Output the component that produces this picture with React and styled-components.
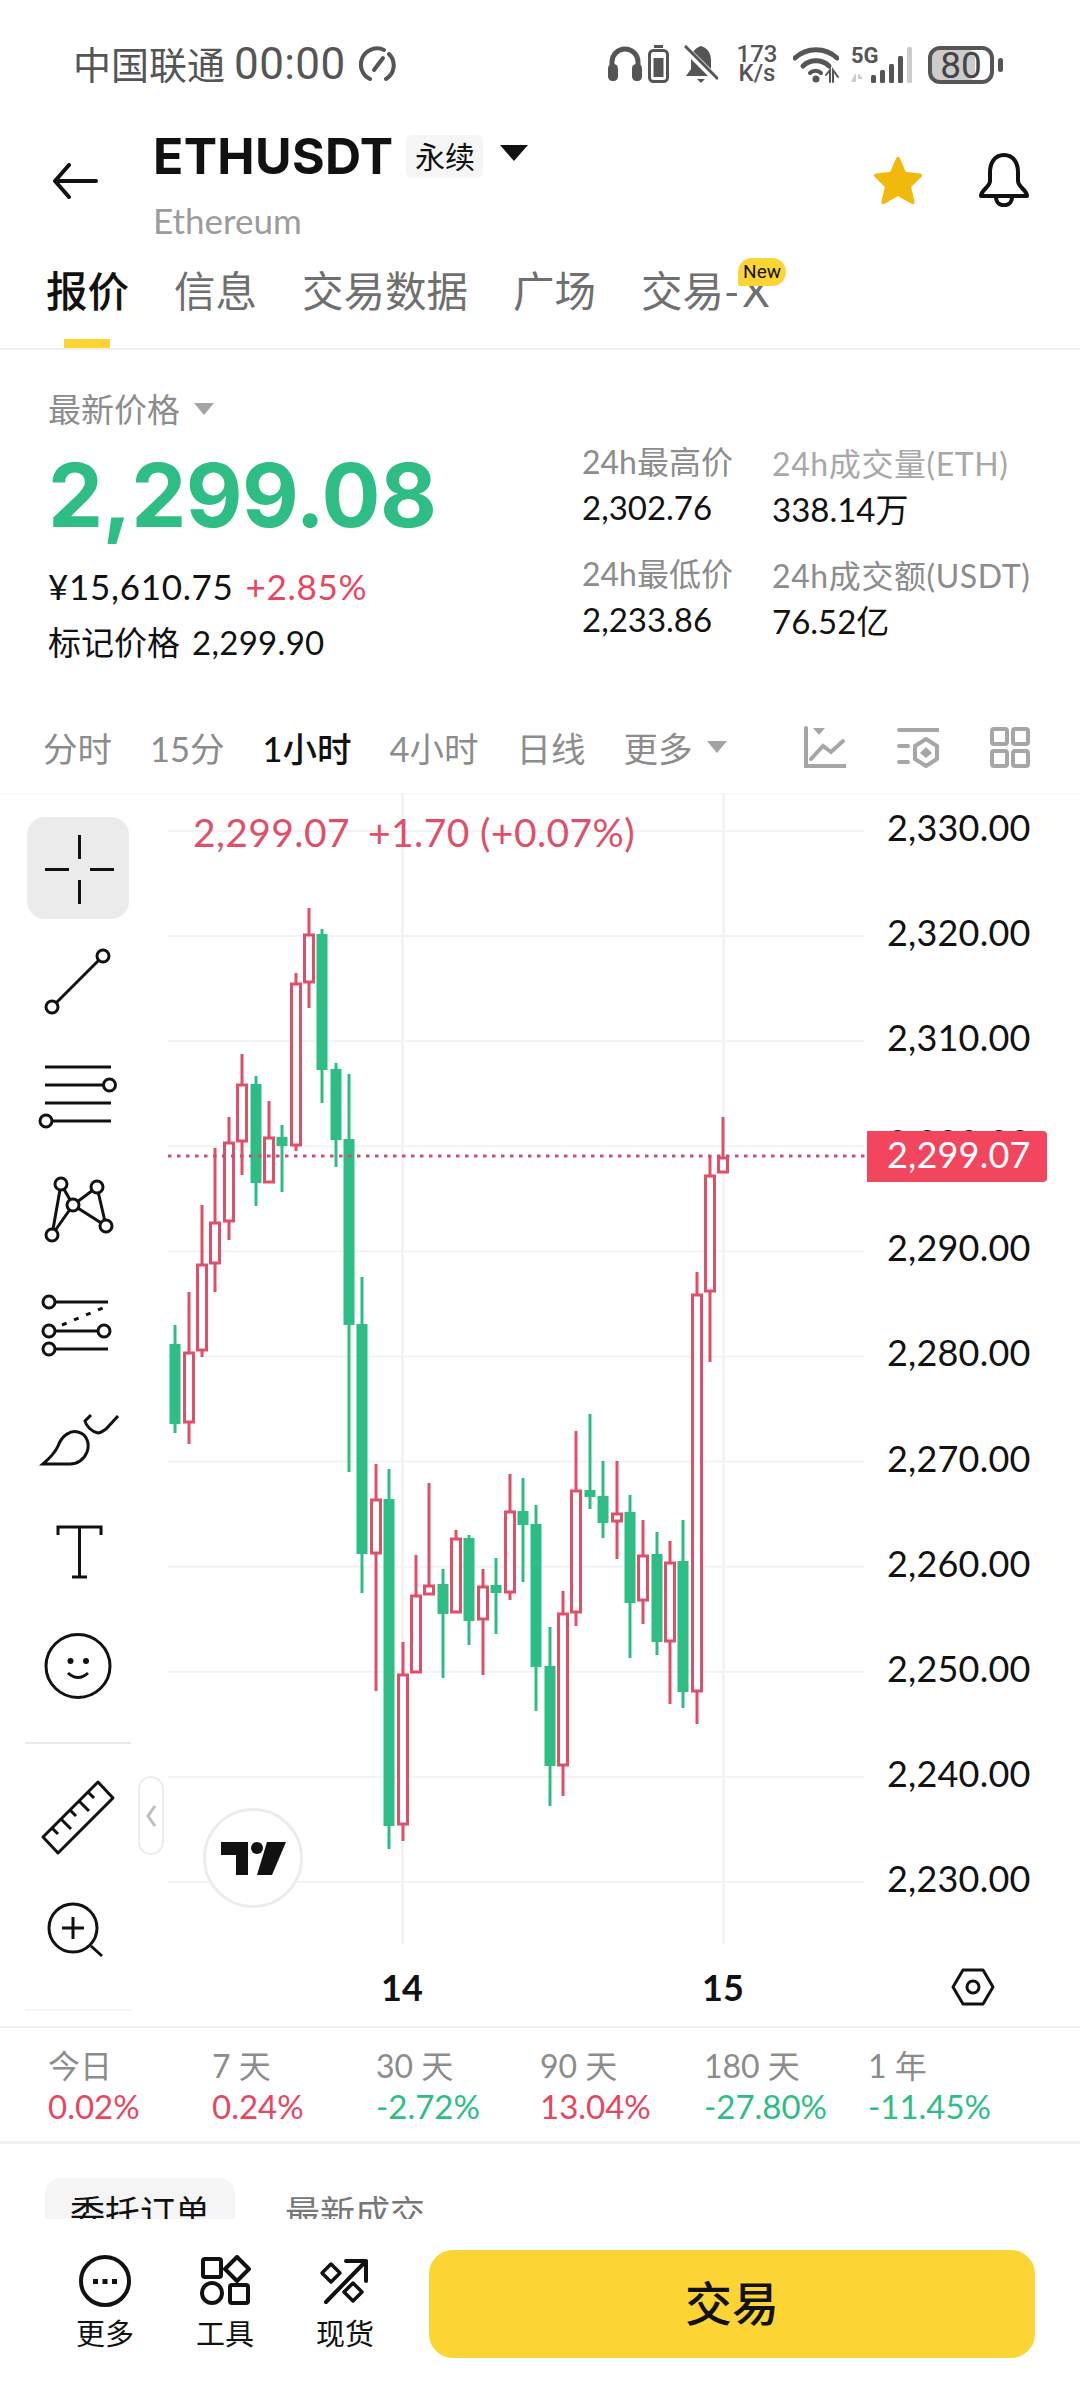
import React from "react";
import styled, { createGlobalStyle } from "styled-components";

const GlobalStyle = createGlobalStyle`
  html, body {
    margin: 0;
    padding: 0;
    background: #fff;
    font-family: Lato, "Noto Sans CJK SC", sans-serif;
  }
  * { box-sizing: border-box; }
`;

const GREEN = "#2ebd85";
const RED = "#de4f69";
const PINK = "#e8465f";
const GREY = "#8c8c8c";

const Page = styled.div`
  width: 1080px;
  height: 2388px;
  overflow: hidden;
  display: flex;
  flex-direction: column;
  background: #fff;
  color: #111;
`;

/* status bar */
const StatusBar = styled.div`
  height: 117px;
  flex: none;
  display: flex;
  align-items: flex-start;
  padding: 45px 77px 0 73px;
  color: #555;
`;
const Carrier = styled.span`
  font-size: 38px;
  line-height: 38px;
`;
const Clock = styled.span`
  font-family: Roboto, sans-serif;
  font-size: 44px;
  line-height: 38px;
  font-weight: 400;
  margin-left: 9px;
  letter-spacing: 0.4px;
`;
const StatusGroup = styled.div`
  margin-left: auto;
  display: flex;
  align-items: flex-start;
`;
const StatusIcon = styled.svg`
  display: block;
  flex: none;
  margin-left: ${(p) => p.$gap || 0}px;
  margin-top: ${(p) => p.$top || 0}px;
`;
const Speed = styled.div`
  width: 42px;
  margin-left: 18px;
  margin-top: 0;
  font-family: Roboto, sans-serif;
  font-weight: 500;
  font-size: 24px;
  line-height: 19px;
  text-align: center;
  color: #555;
`;

/* header */
const Header = styled.div`
  height: 133px;
  flex: none;
  display: flex;
  align-items: flex-start;
  padding: 0 50px 0 52px;
`;
const BackIcon = styled.svg`
  margin-top: 46px;
  flex: none;
`;
const TitleBlock = styled.div`
  margin-left: 55px;
  margin-top: 9px;
`;
const TitleRow = styled.div`
  display: flex;
  align-items: center;
  height: 60px;
`;
const Symbol = styled.span`
  font-family: Inter, sans-serif;
  font-weight: 700;
  font-size: 50px;
  line-height: 60px;
  letter-spacing: 0.3px;
`;
const Badge = styled.span`
  margin-left: 13px;
  width: 77px;
  height: 43px;
  border-radius: 6px;
  background: #f5f5f5;
  font-size: 30px;
  line-height: 43px;
  text-align: center;
`;
const TitleCaret = styled.span`
  margin-left: 17px;
  margin-top: -6px;
  width: 0;
  height: 0;
  border-left: 14px solid transparent;
  border-right: 14px solid transparent;
  border-top: 16px solid #111;
`;
const SubName = styled.div`
  margin: 14px 0 0 0;
  font-size: 35px;
  line-height: 40px;
  color: #9c9c9c;
`;
const HeaderIcon = styled.svg`
  flex: none;
  margin-top: ${(p) => p.$top}px;
  margin-left: ${(p) => p.$left};
`;

/* tabs */
const Tabs = styled.div`
  height: 100px;
  flex: none;
  display: flex;
  gap: 45px;
  padding: 16px 0 0 46px;
  border-bottom: 2px solid #eee;
`;
const Tab = styled.div`
  position: relative;
  height: 82px;
  font-size: 41.5px;
  line-height: 50px;
  color: ${(p) => (p.$active ? "#111" : "#6f6f6f")};
  font-weight: ${(p) => (p.$active ? 500 : 400)};
  ${(p) =>
    p.$active &&
    `&::after {
      content: "";
      position: absolute;
      left: 18px;
      bottom: 0;
      width: 46px;
      height: 9px;
      background: #fcd535;
    }`}
`;
const TabX = styled.span`
  letter-spacing: 3px;
`;
const NewTag = styled.span`
  position: absolute;
  left: 97px;
  top: -8px;
  width: 48px;
  height: 28px;
  border-radius: 14px 14px 14px 2px;
  background: #fcd535;
  color: #111;
  font-family: Roboto, sans-serif;
  font-size: 19px;
  line-height: 28px;
  text-align: center;
`;

/* price summary */
const Summary = styled.div`
  height: 355px;
  flex: none;
  display: flex;
`;
const SummaryLeft = styled.div`
  width: 582px;
  padding: 40px 0 0 48px;
`;
const PriceLabel = styled.div`
  display: flex;
  align-items: center;
  gap: 14px;
  font-size: 33px;
  line-height: 38px;
  color: ${GREY};
`;
const SmallCaret = styled.span`
  width: 0;
  height: 0;
  border-left: ${(p) => p.$size}px solid transparent;
  border-right: ${(p) => p.$size}px solid transparent;
  border-top: ${(p) => p.$size + 2}px solid #a3a3a3;
`;
const BigPrice = styled.div`
  margin: 17px 0 0 0;
  font-family: Inter, sans-serif;
  font-weight: 700;
  font-size: 87.5px;
  line-height: 100px;
  letter-spacing: -0.6px;
  color: ${GREEN};
`;
const FiatLine = styled.div`
  margin-top: 21px;
  font-size: 35px;
  line-height: 40px;
  letter-spacing: 0.7px;
  display: flex;
  gap: 12px;
`;
const Change = styled.span`
  color: ${PINK};
`;
const MarkLine = styled.div`
  margin-top: 16px;
  font-size: 33px;
  line-height: 40px;
  display: flex;
  gap: 12px;
  span:last-child {
    font-size: 33px;
    letter-spacing: 0.3px;
  }
`;
const StatColumn = styled.div`
  width: ${(p) => p.$width}px;
  padding-top: ${(p) => p.$top}px;
  display: flex;
  flex-direction: column;
  gap: 27px;
`;
const StatLabel = styled.div`
  font-size: 32px;
  line-height: 40px;
  white-space: nowrap;
  letter-spacing: ${(p) => p.$spacing || 0}px;
  color: ${(p) => p.$color || GREY};
`;
const StatValue = styled.div`
  margin-top: 5px;
  font-size: 33px;
  line-height: 40px;
  color: #111;
`;

/* interval selector */
const Intervals = styled.div`
  height: 88px;
  flex: none;
  display: flex;
  align-items: center;
  gap: 38px;
  padding: 0 50px 4px 43px;
  font-size: 34.5px;
  color: ${GREY};
`;
const Interval = styled.span`
  color: ${(p) => (p.$active ? "#111" : GREY)};
  font-weight: ${(p) => (p.$active ? 500 : 400)};
`;
const MoreInterval = styled.span`
  display: flex;
  align-items: center;
  gap: 14px;
`;
const ChartTools = styled.div`
  margin-left: auto;
  display: flex;
  gap: 51px;
`;

/* chart */
const Chart = styled.div`
  position: relative;
  height: 1151px;
  flex: none;
  display: grid;
  grid-template-columns: 168px 699px 213px;
  border-top: 1px solid #f6f6f6;
`;
const Toolbar = styled.div`
  position: relative;
  z-index: 2;
  padding: 23px 0 0 27px;
  display: flex;
  flex-direction: column;
  gap: 12px;
`;
const ToolButton = styled.div`
  width: 102px;
  height: 102px;
  flex: none;
  border-radius: 18px;
  background: ${(p) => (p.$active ? "#ebebeb" : "transparent")};
`;
const ToolDivider = styled.div`
  width: 106px;
  height: 2px;
  flex: none;
  margin: ${(p) => (p.$faint ? "15px 0 0 -2px" : "13px 0 10px -2px")};
  background: ${(p) => (p.$faint ? "#f6f6f6" : "#eaeaea")};
`;
const CollapseHandle = styled.div`
  position: absolute;
  left: 138px;
  top: 982px;
  width: 26px;
  height: 79px;
  border: 2px solid #ececec;
  border-radius: 13px;
  background: #fff;
  display: flex;
  align-items: center;
  justify-content: center;
`;
const Plot = styled.svg`
  display: block;
`;
const Legend = styled.div`
  position: absolute;
  left: 193px;
  top: 16px;
  display: flex;
  gap: 18px;
  font-size: 39px;
  line-height: 44px;
  letter-spacing: 0.4px;
  color: ${RED};
`;
const LogoBadge = styled.div`
  position: absolute;
  left: 203px;
  top: 1014px;
  width: 100px;
  height: 100px;
  border-radius: 50%;
  border: 3px solid #ececec;
  background: #fff;
  display: flex;
  align-items: center;
  justify-content: center;
`;
const PriceAxis = styled.div`
  margin-top: -19px;
  padding-left: 20px;
  display: flex;
  flex-direction: column;
`;
const AxisLabel = styled.div`
  height: 105.1px;
  font-size: 36px;
  line-height: 105px;
  letter-spacing: 0.2px;
  color: #111;
`;
const LastPriceTag = styled.div`
  position: absolute;
  left: 867px;
  top: 337px;
  width: 180px;
  height: 51px;
  padding-left: 20px;
  border-radius: 0 4px 4px 0;
  background: #f2465f;
  color: #fff;
  font-size: 36px;
  letter-spacing: 0.2px;
  line-height: 46px;
`;

/* time axis */
const TimeAxis = styled.div`
  height: 84px;
  flex: none;
  display: flex;
  align-items: center;
  padding: 4px 85px 0 381px;
  border-bottom: 2px solid #eee;
`;
const TimeTick = styled.span`
  width: 40px;
  margin-right: ${(p) => p.$after || 0}px;
  text-align: center;
  font-weight: 700;
  font-size: 36px;
  color: #111;
`;
const AxisSettings = styled.svg`
  margin-left: auto;
`;

/* period returns */
const Returns = styled.div`
  height: 116px;
  flex: none;
  display: grid;
  grid-template-columns: repeat(6, 164px);
  padding: 18px 0 0 48px;
  border-bottom: 3px solid #f0f0f0;
`;
const ReturnLabel = styled.div`
  font-size: 32px;
  line-height: 40px;
  color: ${GREY};
`;
const ReturnValue = styled.div`
  font-size: 33px;
  line-height: 40px;
  color: ${(p) => (p.$down ? GREEN : PINK)};
`;

/* order book tabs, cut by the footer */
const BookTabs = styled.div`
  height: 75px;
  flex: none;
  overflow: hidden;
  display: flex;
  padding: 34px 0 0 45px;
`;
const BookTab = styled.div`
  height: 100px;
  padding: 14px 25px 0;
  margin-right: 25px;
  border-radius: 16px;
  background: ${(p) => (p.$active ? "#f5f5f5" : "transparent")};
  color: ${(p) => (p.$active ? "#111" : "#777")};
  font-size: 35px;
  line-height: 40px;
`;

/* footer */
const Footer = styled.div`
  height: 169px;
  flex: none;
  display: flex;
  padding: 31px 45px 0;
  background: #fff;
`;
const FooterItem = styled.div`
  width: 120px;
  height: 108px;
  display: flex;
  flex-direction: column;
  align-items: center;
  font-size: 29px;
  line-height: 36px;
  padding-top: 5px;
  svg {
    display: block;
    margin-bottom: 9px;
  }
`;
const TradeButton = styled.div`
  margin-left: 24px;
  flex: 1;
  height: 108px;
  border-radius: 24px;
  background: #fcd535;
  font-size: 47px;
  font-weight: 500;
  line-height: 106px;
  text-align: center;
  color: #111;
`;

// [colour, wick top, body top, body bottom, wick bottom], page y values read off the picture
const CANDLES = [
  ["g", 1325, 1344, 1424, 1433],
  ["r", 1292, 1352, 1423, 1444],
  ["r", 1205, 1264, 1351, 1357],
  ["r", 1148, 1222, 1264, 1292],
  ["r", 1117, 1142, 1222, 1240],
  ["r", 1054, 1084, 1142, 1175],
  ["g", 1076, 1084, 1183, 1206],
  ["r", 1101, 1137, 1183, 1183],
  ["g", 1125, 1137, 1146, 1192],
  ["r", 973, 983, 1146, 1151],
  ["r", 908, 934, 983, 1008],
  ["g", 929, 934, 1070, 1103],
  ["g", 1063, 1069, 1140, 1167],
  ["g", 1074, 1139, 1325, 1472],
  ["g", 1277, 1324, 1554, 1593],
  ["r", 1464, 1499, 1554, 1691],
  ["g", 1469, 1499, 1826, 1849],
  ["r", 1642, 1674, 1825, 1841],
  ["r", 1555, 1595, 1673, 1673],
  ["r", 1483, 1585, 1595, 1595],
  ["g", 1569, 1584, 1614, 1678],
  ["r", 1530, 1538, 1613, 1613],
  ["g", 1535, 1538, 1621, 1645],
  ["r", 1569, 1586, 1620, 1675],
  ["g", 1558, 1585, 1593, 1634],
  ["r", 1474, 1511, 1593, 1600],
  ["g", 1478, 1511, 1525, 1582],
  ["g", 1505, 1524, 1667, 1711],
  ["g", 1627, 1666, 1766, 1806],
  ["r", 1591, 1613, 1766, 1796],
  ["r", 1431, 1490, 1613, 1626],
  ["g", 1414, 1490, 1497, 1509],
  ["g", 1461, 1496, 1523, 1538],
  ["r", 1461, 1513, 1522, 1559],
  ["g", 1495, 1512, 1603, 1658],
  ["r", 1520, 1555, 1601, 1624],
  ["g", 1532, 1554, 1642, 1655],
  ["r", 1541, 1562, 1642, 1704],
  ["g", 1520, 1561, 1692, 1708],
  ["r", 1272, 1294, 1692, 1724],
  ["r", 1156, 1175, 1292, 1362],
  ["r", 1117, 1157, 1173, 1173],
];

const Candle = ({ x, data }) => {
  const [kind, wickTop, bodyTop, bodyBottom, wickBottom] = data;
  const colour = kind === "g" ? GREEN : RED;
  return (
    <g>
      <rect x={x - 1.5} y={wickTop} width="3" height={wickBottom - wickTop} fill={colour} />
      {kind === "g" ? (
        <rect x={x - 5.5} y={bodyTop} width="11" height={bodyBottom - bodyTop} fill={colour} />
      ) : (
        <rect
          x={x - 4.5}
          y={bodyTop + 1}
          width="9"
          height={bodyBottom - bodyTop - 2}
          fill="#fff"
          stroke={colour}
          strokeWidth="3"
        />
      )}
    </g>
  );
};

const PriceChart = () => (
  <Plot width="699" height="1150" viewBox="168 794 699 1150">
    {Array.from({ length: 11 }, (_, i) => (
      <rect key={i} x="168" y={830 + i * 105.1} width="696" height="2" fill="#f3f3f3" />
    ))}
    <rect x="401" y="794" width="3" height="1150" fill="#f3f3f3" />
    <rect x="722" y="794" width="3" height="1150" fill="#f3f3f3" />
    {CANDLES.map((c, i) => (
      <Candle key={i} x={Math.round(175.3 + 13.37 * i)} data={c} />
    ))}
    <line x1="168" y1="1156" x2="867" y2="1156" stroke="#c9506f" strokeWidth="3" strokeDasharray="3.5 5.5" />
  </Plot>
);

const tool = { width: 102, height: 102, viewBox: "0 0 102 102", fill: "none", stroke: "#111", strokeWidth: 3 };

const TOOL_ICONS = [
  <svg {...tool}>
    <path d="M52.5 18v24M52.5 63v24M18 52.5h24M63 52.5h24" />
  </svg>,
  <svg {...tool}>
    <path d="M29 72 72 29" />
    <circle cx="25" cy="76" r="6" />
    <circle cx="76" cy="25" r="6" />
  </svg>,
  <svg {...tool}>
    <path d="M18 22h66M18 40h58M18 58h66M25 76h59" />
    <circle cx="82.5" cy="40" r="6" />
    <circle cx="19" cy="76" r="6" />
  </svg>,
  <svg {...tool}>
    <path d="M34 25 25 76 46 46 34 25M46 46 70 28 79 67 46 46" />
    <g fill="#fff">
      <circle cx="34" cy="25" r="6" />
      <circle cx="70" cy="28" r="6" />
      <circle cx="46" cy="46" r="6" />
      <circle cx="79" cy="67" r="6" />
      <circle cx="25" cy="76" r="6" />
    </g>
  </svg>,
  <svg {...tool}>
    <path d="M28 29h53M28 58h44M28 76h53" />
    <path d="M35 52 78 34" strokeDasharray="5 8" />
    <circle cx="22" cy="29" r="6" />
    <circle cx="22" cy="58" r="6" />
    <circle cx="77" cy="58" r="6" />
    <circle cx="22" cy="76" r="6" />
  </svg>,
  <svg {...tool}>
    <path d="M16 77C24 70 28 66 31 59 35 48 44 43 51 45 60 47 63 57 60 65 57 73 50 77 43 77Z" />
    <path d="M64 28 58 34C59 39 65 45 71 46 74 46 76 44 79 42L91 29" />
  </svg>,
  <svg {...tool}>
    <path d="M31 34V26h43v8M52.5 26v50M45 76h15" />
  </svg>,
  <svg {...tool}>
    <ellipse cx="51" cy="51" rx="32" ry="31.5" />
    <circle cx="43.5" cy="46" r="3" fill="#111" stroke="none" />
    <circle cx="59" cy="46" r="3" fill="#111" stroke="none" />
    <path d="M41 58Q51 67 61 58" />
  </svg>,
];

const RulerIcon = () => (
  <svg {...tool}>
    <path d="M16 71 71 16 86 32 31 87Z" strokeLinejoin="round" />
    <path d="M25 62 31 68M34 53 44 63M43 44 49 50M52 35 62 45M61 26 67 32" />
  </svg>
);
const ZoomIcon = () => (
  <svg {...tool}>
    <circle cx="46" cy="48" r="24" />
    <path d="M35 48h22M46 37v22M64 66 75 76" />
  </svg>
);

const Icons = {
  More: () => (
    <svg width="52" height="52" viewBox="0 0 52 52" fill="none" stroke="#111" strokeWidth="4">
      <circle cx="26" cy="26" r="24" />
      <path d="M14 24h5v5h-5zM23.500 24h5v5h-5zM33 24h5v5h-5z" fill="#111" stroke="none" />
    </svg>
  ),
  Tools: () => (
    <svg width="52" height="52" viewBox="0 0 52 52" fill="none" stroke="#111" strokeWidth="4">
      <rect x="4" y="4" width="18" height="18" rx="2" />
      <path d="M38 2 50 14 38 26 26 14Z" strokeLinejoin="round" />
      <circle cx="13" cy="38" r="10" />
      <rect x="31" y="30" width="18" height="18" rx="2" />
    </svg>
  ),
  Spot: () => (
    <svg width="52" height="52" viewBox="0 0 52 52" fill="none" stroke="#111" strokeWidth="4" strokeLinecap="round">
      <path d="M7 47 47 6M27 6h20v20" strokeLinejoin="round" />
      <path d="M12 9 21 18 12 27 3 18Z" strokeLinejoin="round" strokeWidth="3.500" />
      <path d="M34 28 43 37 34 46 25 37Z" strokeLinejoin="round" strokeWidth="3.500" />
    </svg>
  ),
};

const App = () => {
  const returns = [
    ["今日", "0.02%"],
    ["7 天", "0.24%"],
    ["30 天", "-2.72%"],
    ["90 天", "13.04%"],
    ["180 天", "-27.80%"],
    ["1 年", "-11.45%"],
  ];
  const axis = ["2,330.00", "2,320.00", "2,310.00", "2,300.00", "2,290.00", "2,280.00", "2,270.00", "2,260.00", "2,250.00", "2,240.00", "2,230.00"];

  return (
    <Page>
      <GlobalStyle />
      <StatusBar>
        <Carrier>中国联通</Carrier>
        <Clock>00:00</Clock>
        <StatusIcon $gap={12} width="40" height="38" viewBox="0 0 40 38" fill="none" stroke="#555" strokeWidth="4">
          <path d="M12 34A16 16 0 0 1 26 5M31 9A16 16 0 0 1 28 34" strokeLinecap="round" />
          <path d="M16 25 25 13" strokeLinecap="round" />
        </StatusIcon>
        <StatusGroup>
          <StatusIcon width="34" height="38" viewBox="0 0 34 38" fill="none" stroke="#555" strokeWidth="5">
            <path d="M4 22V17A13 13 0 0 1 30 17V22" />
            <rect x="0" y="19" width="10" height="17" rx="4.500" fill="#555" stroke="none" />
            <rect x="24" y="19" width="10" height="17" rx="4.500" fill="#555" stroke="none" />
          </StatusIcon>
          <StatusIcon $gap={6} width="21" height="38" viewBox="0 0 21 38" fill="none" stroke="#555" strokeWidth="3">
            <rect x="6" y="0" width="9" height="3" fill="#555" stroke="none" />
            <rect x="1.500" y="5.500" width="18" height="31" rx="4" />
            <rect x="5.500" y="13" width="10" height="19" fill="#555" stroke="none" />
          </StatusIcon>
          <StatusIcon $gap={15} width="34" height="39" viewBox="0 0 34 39" fill="none">
            <path d="M17 1C24 3 27 9 27 15V24L32 31H2L7 24V15C7 9 10 3 17 1Z" fill="#555" />
            <path d="M13 34h8L17 38Z" fill="#555" />
            <path d="M0 2 33 35" stroke="#fff" strokeWidth="7" />
            <path d="M1 1 34 34" stroke="#555" strokeWidth="3" />
          </StatusIcon>
          <Speed>
            173
            <br />
            K/s
          </Speed>
          <StatusIcon $gap={15} $top={2} width="46" height="36" viewBox="0 0 46 36" fill="none" stroke="#555" strokeLinecap="round">
            <path d="M2 11C14 0 32 0 44 11" strokeWidth="5" />
            <path d="M10 19C17 12 29 12 36 19" strokeWidth="5" />
            <path d="M17 26C20 23 25 23 28 26" strokeWidth="4" />
            <circle cx="23" cy="32" r="3.500" fill="#555" stroke="none" />
            <path d="M33 28 37 23V35M40 35V23L45 30" strokeWidth="2" />
          </StatusIcon>
          <StatusIcon $gap={12} $top={2} width="61" height="36" viewBox="0 0 61 36" fill="#555">
            <text x="0" y="16" fontFamily="Roboto, sans-serif" fontWeight="700" fontSize="22">5G</text>
            <path d="M0 35 4 27h1v8zM7 27h1l4 5h-5z" fill="#ccc" />
            <rect x="20" y="28" width="5" height="8" rx="1.500" />
            <rect x="29" y="23" width="5" height="13" rx="1.500" />
            <rect x="38" y="17" width="5" height="19" rx="1.500" />
            <rect x="47" y="9" width="5" height="27" rx="1.500" />
            <rect x="56" y="0" width="5" height="36" rx="1.500" fill="#ccc" />
          </StatusIcon>
          <StatusIcon $gap={16} $top={1} width="75" height="38" viewBox="0 0 75 38" fill="none">
            <rect x="3" y="3" width="44" height="32" rx="8" fill="#ccc" />
            <rect x="2" y="2" width="62" height="34" rx="10" stroke="#555" strokeWidth="4" />
            <rect x="70" y="12" width="5" height="14" rx="2.500" fill="#555" />
            <text x="33" y="32" textAnchor="middle" fontFamily="Roboto, sans-serif" fontSize="37" fill="#444">80</text>
          </StatusIcon>
        </StatusGroup>
      </StatusBar>

      <Header>
        <BackIcon width="46" height="36" viewBox="0 0 46 36" fill="none" stroke="#111" strokeWidth="4" strokeLinecap="round" strokeLinejoin="round">
          <path d="M44 18H3M17 2 3 18 17 34" />
        </BackIcon>
        <TitleBlock>
          <TitleRow>
            <Symbol>ETHUSDT</Symbol>
            <Badge>永续</Badge>
            <TitleCaret />
          </TitleRow>
          <SubName>Ethereum</SubName>
        </TitleBlock>
        <HeaderIcon $top={39} $left="auto" width="52" height="50" viewBox="-2 -2 56 54">
          <path d="M26 1 33 17 50 19 38 31 42 48 26 39 10 48 14 31 2 19 19 17Z" fill="#f0b90b" stroke="#f0b90b" strokeWidth="4" strokeLinejoin="round" />
        </HeaderIcon>
        <HeaderIcon $top={36} $left="54px" width="52" height="54" viewBox="0 0 52 54" fill="none" stroke="#111" strokeWidth="4">
          <path d="M26 2C16 2 12 11 12 19V28C12 34 3 37 3 43H49C49 37 40 34 40 28V19C40 11 36 2 26 2Z" strokeLinejoin="round" />
          <path d="M18 44C18 55 34 55 34 44" />
        </HeaderIcon>
      </Header>

      <Tabs>
        <Tab $active>报价</Tab>
        <Tab>信息</Tab>
        <Tab>交易数据</Tab>
        <Tab>广场</Tab>
        <Tab>
          交易<TabX>-X</TabX>
          <NewTag>New</NewTag>
        </Tab>
      </Tabs>

      <Summary>
        <SummaryLeft>
          <PriceLabel>
            最新价格
            <SmallCaret $size={10} />
          </PriceLabel>
          <BigPrice>2,299.08</BigPrice>
          <FiatLine>
            <span>¥15,610.75</span>
            <Change>+2.85%</Change>
          </FiatLine>
          <MarkLine>
            <span>标记价格</span>
            <span>2,299.90</span>
          </MarkLine>
        </SummaryLeft>
        <StatColumn $width={190} $top={92}>
          <div>
            <StatLabel>24h最高价</StatLabel>
            <StatValue>2,302.76</StatValue>
          </div>
          <div>
            <StatLabel>24h最低价</StatLabel>
            <StatValue>2,233.86</StatValue>
          </div>
        </StatColumn>
        <StatColumn $width={300} $top={94}>
          <div>
            <StatLabel $color="#a8a8a8" $spacing={0.6}>24h成交量(ETH)</StatLabel>
            <StatValue>338.14万</StatValue>
          </div>
          <div>
            <StatLabel $spacing={0.6}>24h成交额(USDT)</StatLabel>
            <StatValue>76.52亿</StatValue>
          </div>
        </StatColumn>
      </Summary>

      <Intervals>
        <Interval>分时</Interval>
        <Interval>15分</Interval>
        <Interval $active>1小时</Interval>
        <Interval>4小时</Interval>
        <Interval>日线</Interval>
        <MoreInterval>
          更多
          <SmallCaret $size={10} />
        </MoreInterval>
        <ChartTools>
          <svg width="42" height="42" viewBox="0 0 42 42" fill="none" stroke="#a6a6a6" strokeWidth="4" strokeLinecap="round">
            <path d="M2 2V40H41" />
            <path d="M9 2H21L15 9Z" fill="#a6a6a6" stroke="none" />
            <path d="M7 33 19 20 27 26 39 15" />
          </svg>
          <svg width="42" height="42" viewBox="0 0 42 42" fill="none" stroke="#a6a6a6" strokeWidth="4" strokeLinecap="round">
            <path d="M2 4H41M2 20H11M2 36H11" />
            <path d="M29 13 40 20V33L29 40 18 33V20Z" strokeLinejoin="round" />
            <path d="M29 21 35 27 29 32 23 27Z" fill="#a6a6a6" stroke="none" />
          </svg>
          <svg width="40" height="42" viewBox="0 0 40 42" fill="none" stroke="#a6a6a6" strokeWidth="4">
            <rect x="2" y="3" width="15" height="15" rx="2" />
            <rect x="23" y="3" width="15" height="15" rx="2" />
            <rect x="2" y="25" width="15" height="15" rx="2" />
            <rect x="23" y="25" width="15" height="15" rx="2" />
          </svg>
        </ChartTools>
      </Intervals>

      <Chart>
        <Toolbar>
          {TOOL_ICONS.map((icon, i) => (
            <ToolButton key={i} $active={i === 0}>
              {icon}
            </ToolButton>
          ))}
          <ToolDivider />
          <ToolButton>
            <RulerIcon />
          </ToolButton>
          <ToolButton>
            <ZoomIcon />
          </ToolButton>
          <ToolDivider $faint />
        </Toolbar>
        <PriceChart />
        <PriceAxis>
          {axis.map((label) => (
            <AxisLabel key={label}>{label}</AxisLabel>
          ))}
        </PriceAxis>
        <Legend>
          <span>2,299.07</span>
          <span>+1.70 (+0.07%)</span>
        </Legend>
        <LastPriceTag>2,299.07</LastPriceTag>
        <CollapseHandle>
          <svg width="12" height="24" viewBox="0 0 12 24" fill="none" stroke="#bdbdbd" strokeWidth="3">
            <path d="M10 2 3 12 10 22" />
          </svg>
        </CollapseHandle>
        <LogoBadge>
          <svg width="65" height="33" viewBox="0 0 65 33" fill="#111">
            <path d="M0 0H27V33H15V13H0Z" />
            <circle cx="36" cy="6" r="6" />
            <path d="M46 0H65L51 33H36Z" />
          </svg>
        </LogoBadge>
      </Chart>

      <TimeAxis>
        <TimeTick $after={281}>14</TimeTick>
        <TimeTick>15</TimeTick>
        <AxisSettings width="44" height="38" viewBox="0 0 44 38" fill="none" stroke="#111" strokeWidth="3">
          <path d="M12 2H32L42 19 32 36H12L2 19Z" strokeLinejoin="round" />
          <circle cx="22" cy="19" r="6" />
        </AxisSettings>
      </TimeAxis>

      <Returns>
        {returns.map(([label, value]) => (
          <div key={label}>
            <ReturnLabel>{label}</ReturnLabel>
            <ReturnValue $down={value.startsWith("-")}>{value}</ReturnValue>
          </div>
        ))}
      </Returns>

      <BookTabs>
        <BookTab $active>委托订单</BookTab>
        <BookTab>最新成交</BookTab>
      </BookTabs>

      <Footer>
        <FooterItem>
          <Icons.More />
          更多
        </FooterItem>
        <FooterItem>
          <Icons.Tools />
          工具
        </FooterItem>
        <FooterItem>
          <Icons.Spot />
          现货
        </FooterItem>
        <TradeButton>交易</TradeButton>
      </Footer>
    </Page>
  );
};

export default App;
